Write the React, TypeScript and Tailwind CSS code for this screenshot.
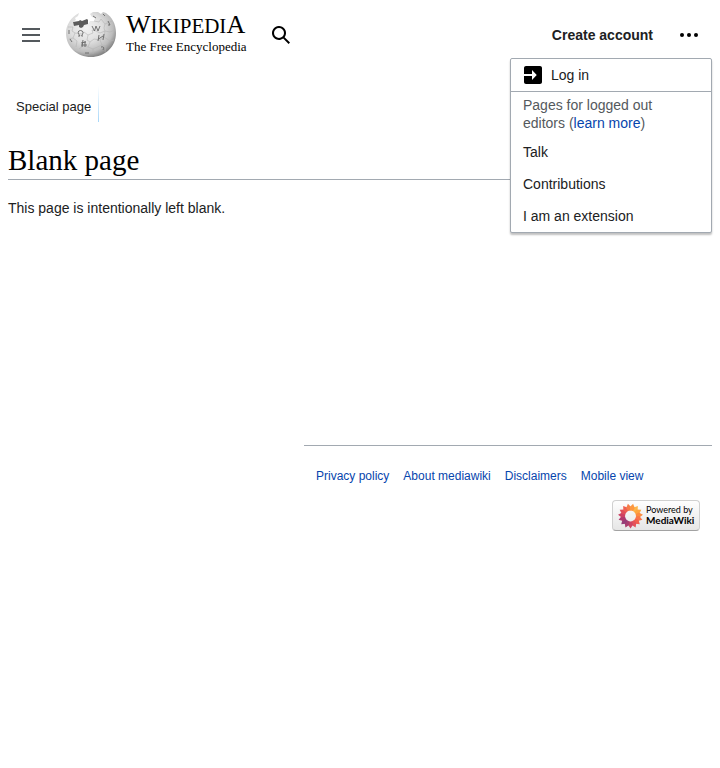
import React from "react";

const petals = Array.from({ length: 15 }, (_, i) => i * 24);
const petalColors = ["#fdb548", "#fda640", "#fb8c40", "#f9754a", "#f2604e", "#e4525a", "#cf4563", "#a93d70", "#963d78", "#b0386e", "#cc4064", "#e04e5a", "#ee6052", "#f67c48", "#fc9840"];

function Globe() {
  return (
    <svg width="50" height="46" viewBox="0 0 50 46" aria-hidden="true">
      <defs>
        <radialGradient id="globe" cx="0.4" cy="0.35" r="0.66">
          <stop offset="0" stopColor="#f4f4f4" />
          <stop offset="0.5" stopColor="#dedede" />
          <stop offset="0.82" stopColor="#bcbcbc" />
          <stop offset="1" stopColor="#858585" />
        </radialGradient>
      </defs>
      <path d="M13 1 C5 5 0 13 0 21 C0 35 11 45 25 45 C39 45 50 35 50 21 C50 12 46 5 40 1 L37 0 L35 2 L32 0 L27 0 L24 2 L26 5 L29 6 L28 9 L24 9 L22 12 L8 12 L7 10 L10 8 L9 6 L12 4 Z" fill="url(#globe)" />
      <path d="M7 10 L13 9 L14 8 L16 9 L21 7 L22 8 L22 12 L18 13 L17 15 L15 16 L13 15 L13 13 L8 14 Z" fill="#5c5c5c" />
      <path d="M2 15 L7 15 L6 19 L9 21 L7 26 L3 27 M9 21 L16 22 L18 20 L22 23 L21 28 L24 30 L22 35 L17 34 L13 37 M7 26 L11 29 L10 35 M22 23 L27 21 L26 18 L30 19 L34 21 L39 19 L38 25 L34 28 L28 27 L24 30 M22 35 L27 37 L27 42 M34 28 L36 33 L40 34 L39 40 M27 37 L36 33 M39 19 L44 20 L49 18 M38 25 L44 29 L48 28 M28 9 L33 10 L35 7 L39 12 L38 16 L39 19 M39 12 L46 9" fill="none" stroke="#b4b4b4" strokeWidth="0.6" />
      <path d="M12 24 H14 Q10 19 14.500 18.500 Q19 19 15.500 24 H17 M26 14 L28.500 19 L30 14 L32 19 L34 14 M33 23 L32 29 M38 22 L37 28 M32.500 27 L37 24 M15 31 L20 30 M17 28 L16 35 M19 29 L19 35 M15 33 L21 33 M35 35 Q39 34 37 38 M42 9 L44 13 L42 13 M3 18 L3 22 M4 27 L6 30 M27 4 L30 6 M37 2 L39 4 M19 41 L23 41" fill="none" stroke="#666" strokeWidth="0.9" />
    </svg>
  );
}

function PoweredBy() {
  return (
    <a href="#mediawiki" aria-label="Powered by MediaWiki" className="flex h-[31px] w-[88px] items-center gap-[3px] rounded-[4px] border border-[#d0d0d0] border-b-[#a2a2a2] bg-linear-to-b from-[#fefefe] to-[#e6e6e6] pl-[5px]">
      <svg width="25" height="26" viewBox="-13 -13 26 26" className="shrink-0" aria-hidden="true">
        {petals.map((angle, i) => (
          <path key={angle} d="M-1.500 -5.600 L-2.600 -9 L0 -13 L2.600 -9 L1.500 -5.600 Z" fill={petalColors[i]} transform={`rotate(${angle + 36})`} />
        ))}
      </svg>
      <span className="font-[Lato,sans-serif] text-[9px] leading-[10px] whitespace-nowrap text-black">
        Powered by
        <br />
        <b className="text-[10px]">MediaWiki</b>
      </span>
    </a>
  );
}

const menuItem = "block px-3 py-[6px] leading-5 text-[#202122]";
const footerLinks = ["Privacy policy", "About mediawiki", "Disclaimers", "Mobile view"];

export default function App() {
  return (
    <div className="bg-white px-2 font-['Liberation_Sans',Arial,sans-serif] text-sm text-[#202122]">
      <header className="flex h-[70px] items-center">
        <button aria-label="Main menu" className="ml-[14px] flex w-[18px] flex-col gap-1">
          <span className="h-[2px] bg-[#54595d]" />
          <span className="h-[2px] bg-[#54595d]" />
          <span className="h-[2px] bg-[#54595d]" />
        </button>
        <a href="#main" className="ml-[26px] flex items-center gap-[10px] font-['Liberation_Serif',serif] text-black">
          <Globe />
          <span className="flex w-[119px] flex-col pb-1 whitespace-nowrap">
            <span className="text-[21px] leading-[26px]"><span className="text-[26px]">W</span>IKIPEDI<span className="text-[26px]">A</span></span>
            <span className="text-[13px] leading-[15px]">The Free Encyclopedia</span>
          </span>
        </a>
        <button aria-label="Search" className="ml-[27px]">
          <svg width="18" height="18" viewBox="1 1 18 18" aria-hidden="true">
            <path d="M12.200 13.600a7 7 0 1 1 1.400-1.400l5.400 5.400-1.400 1.400zM3 8a5 5 0 1 0 10 0A5 5 0 0 0 3 8" fill="#000" />
          </svg>
        </button>
        <nav aria-label="Personal tools" className="relative ml-auto flex items-center gap-[26px] pr-[13px]">
          <a href="#create" className="font-bold">Create account</a>
          <button aria-label="More options" aria-expanded="true" className="flex h-5 w-5 items-center justify-center gap-[3px]">
            <span className="size-1 rounded-full bg-black" />
            <span className="size-1 rounded-full bg-black" />
            <span className="size-1 rounded-full bg-black" />
          </button>
          <div className="absolute top-[33px] right-0 w-[202px] rounded-[2px] border border-[#a2a9b1] bg-white shadow-[0_2px_2px_0_rgba(0,0,0,0.25)]">
            <a href="#login" className="flex h-[33px] items-center gap-2 border-b border-[#a2a9b1] px-3">
              <svg width="20" height="20" viewBox="0 0 20 20" aria-hidden="true">
                <path d="M1 11v6c0 1.100.9 2 2 2h14c1.100 0 2-.9 2-2V3c0-1.100-.9-2-2-2H3c-1.100 0-2 .9-2 2v6h8V5l4.750 5L9 15v-4z" fill="#000" />
              </svg>
              Log in
            </a>
            <p className="px-3 pt-1 pb-1 leading-[18px] text-[#54595d]">
              Pages for logged out<br />editors (<a href="#learn" className="text-[#0645ad]">learn more</a>)
            </p>
            <a href="#talk" className={menuItem}>Talk</a>
            <a href="#contributions" className={menuItem}>Contributions</a>
            <a href="#extension" className={menuItem}>I am an extension</a>
          </div>
        </nav>
      </header>
      <nav aria-label="Namespaces" className="mt-4 flex">
        <a href="#special" className="bg-linear-to-b from-white to-[#a7d7f9] bg-[length:1px_100%] bg-right bg-no-repeat px-2 pt-[13px] pb-2 text-[13px] leading-[15px]">Special page</a>
      </nav>
      <main className="min-h-[323px] pt-5">
        <h1 className="border-b border-[#a2a9b1] font-['Liberation_Serif',serif] text-[29px] leading-[37px] text-black">Blank page</h1>
        <p className="mt-[17px] leading-[22px]">This page is intentionally left blank.</p>
      </main>
      <footer className="ml-[296px] border-t border-[#a2a9b1] px-3 pt-[22px]">
        <ul className="flex gap-[14px] text-xs leading-4">
          {footerLinks.map((label) => (
            <li key={label}><a href="#footer" className="whitespace-nowrap text-[#0645ad]">{label}</a></li>
          ))}
        </ul>
        <div className="mt-4 flex justify-end"><PoweredBy /></div>
      </footer>
    </div>
  );
}
